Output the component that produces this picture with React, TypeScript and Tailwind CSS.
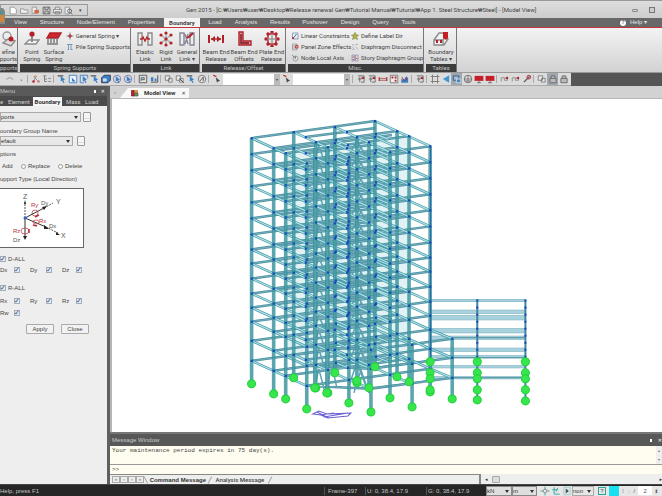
import type { ReactNode } from "react";

/* ---------- small icon set ---------- */

const RED = "#b3202a";
const GREY = "#8b8b8b";
const BLUE = "#3b7fc4";

function Svg({ size = 10, children }: { size?: number; children: ReactNode }) {
  return (
    <svg width={size} height={size} viewBox="0 0 16 16" fill="none" stroke={GREY} strokeWidth="1.4" className="shrink-0" aria-hidden="true">
      {children}
    </svg>
  );
}

const cursor = <path d="M6 3l7 6-3 .5 2 4-2 .8-1.500-4L6 12z" fill={BLUE} stroke="none" />;
const boxes = <path d="M2 3h7v7H2zM7 7h6v6H7z" fill="#eee" stroke="#777" />;

const tools: Record<string, ReactNode> = {
  undo: <path d="M2 9q5-6 11 0" />,
  dot: <path d="M7 9h3l-1.500 2z" fill="#555" stroke="none" />,
  nodes: <><path d="M4 4l8 8M4 12l4-8" stroke="#888" /><circle cx="4" cy="12" r="2" fill={RED} stroke="none" /><circle cx="12" cy="12" r="2" fill="#c77" stroke="none" /><circle cx="7" cy="4" r="2" fill="#c98" stroke="none" /></>,
  tree: <path d="M2 3h5M4 3v9h4M4 8h4M10 7h4M10 12h4" stroke="#777" />,
  pick: <><path d="M1 3h9" stroke="#555" strokeWidth="2" />{cursor}</>,
  win: <><path d="M2 2h12v12H2z" fill="#e7f0fa" stroke={BLUE} /><path d="M6 6l6 6H7z" fill="#2266bb" stroke="none" /></>,
  win2: <><path d="M2 2h12M2 2v12h6M14 2v5" stroke={BLUE} />{cursor}</>,
  cube: <><path d="M1 6l4-4h10v8l-4 4H1z" fill={BLUE} stroke="#335" /><path d="M3 7h6v5H3z" fill="#cde" stroke="none" /></>,
  ring: <><circle cx="8" cy="8" r="6" stroke="#77a" />{cursor}</>,
  doc: <><path d="M2 2h12v12H2z" stroke="#555" fill="#ddd" /><path d="M5 11V6h5v3H6" stroke="#456" /></>,
  align: <><path d="M3 13h11M14 2v11" stroke="#444" /><path d="M3 5h4v6H3zM9 7h3v4H9z" fill={BLUE} stroke="none" /></>,
  boxes,
  boxarrow: <>{boxes}<path d="M8 8l6 6" stroke="#444" /></>,
  clock: <><circle cx="8" cy="8" r="6" stroke="#777" /><path d="M5 11l5-6v6" stroke="#555" /></>,
  redcur: <><path d="M2 2l5 2" stroke={RED} strokeWidth="2" /><path d="M6 5l7 6-3 .5L8 14z" fill="#444" stroke="none" /></>,
  rb: <><path d="M3 3h10v10H8M3 8h6M6 5v8" stroke="#666" /><path d="M9 5h4v3H9z" fill={RED} stroke="none" /></>,
  spanr: <><path d="M2 5v6M14 5v6" stroke={RED} strokeWidth="2" /><path d="M2 7h12M2 10h12" stroke="#a55" /></>,
  grid: <><path d="M2 2h12v12H2z" stroke="#777" fill="#eee" /><path d="M4 4h3v3H4zM9 9h3v3H9zM9 4h3v3H9z" fill={RED} stroke="none" /></>,
  chart: <><path d="M2 14V7l4 3 4-7 3 4v7z" fill={BLUE} stroke="none" /><path d="M3 5l4 6 5-5" stroke={RED} /></>,
  frame: <path d="M4 1v14M12 1v14M1 4h14M1 12h14" stroke="#777" />,
  left: <path d="M13 2v12L3 8z" fill="#3f95cf" stroke="none" />,
  iso: <><path d="M2 3h9v7H2z" fill="#9bbbd8" stroke="#357" /><path d="M7 8h7v6H7z" fill="#4484bd" stroke="#dde" /></>,
  ball: <><circle cx="8" cy="8" r="6" fill="#ddd" stroke="#666" /><path d="M2 8h12M8 2v12M4 11h8" stroke="#777" /></>,
  monitor: <><path d="M1 3h14v8H1z" fill="#c41e28" stroke="none" /><path d="M5 14h6M8 11v3" stroke="#666" /></>,
  path: <><path d="M2 12V6h5v4h5V4" stroke="#888" /><path d="M9 5h4v3H9z" fill={RED} stroke="none" /></>,
  key: <><path d="M3 13L12 4" stroke="#555" strokeWidth="2" /><circle cx="11" cy="5" r="3" stroke={RED} /></>,
  lock: <path d="M3 7h10v7H3zM5 7V3h6v4" fill="#bbb" stroke="#666" />,
};

type ToolItem = string | { sep: true } | { active: string } | { field: string };
const S: ToolItem = { sep: true };

const toolbar: ToolItem[] = [
  "undo", "dot", S, "nodes", "tree", S, "pick", "win", "win2", "pick", "cube", "ring", "ring", S, "doc", "align", S,
  "boxes", "boxarrow", "pick", "clock", S, "redcur", { field: "Select by name" }, "redcur", { field: "Select by number" }, S,
  "rb", "rb", "spanr", "grid", "chart", S, "rb", S, "frame", "left", { active: "iso" }, "ball", "monitor", "monitor", S,
  "path", "path", "key", S, "boxes", { active: "lock" }, "lock",
];

function Toolbar() {
  return (
    <div className="flex h-[13px] shrink-0 items-center bg-[#555]">
      <div className="flex h-full items-center border-b border-[#aaa] bg-[#dcdcdc] pl-1 pr-[2px]">
        {toolbar.map((t, i) => {
          if (typeof t === "string")
            return (
              <button key={i} aria-label={t} className="flex w-[11px] shrink-0 justify-center">
                <Svg>{tools[t]}</Svg>
              </button>
            );
          if ("sep" in t) return <span key={i} className="ml-px mr-[2px] h-2 w-px shrink-0 bg-[#aaa]" />;
          if ("active" in t)
            return (
              <button key={i} aria-label={t.active} className="flex h-3 w-[11px] shrink-0 items-center justify-center bg-[#9fa8b0]">
                <Svg>{tools[t.active]}</Svg>
              </button>
            );
          return (
            <span key={i} className="mx-px flex h-[11px] w-[57px] shrink-0 bg-white">
              <input aria-label={t.field} className="min-w-0 flex-1 bg-white" />
              <button aria-label="Open list" className="w-[6px] bg-[#bbb] text-[4px] leading-[11px] text-[#444]">▾</button>
            </span>
          );
        })}
      </div>
    </div>
  );
}

/* ---------- ribbon ---------- */

const big: Record<string, ReactNode> = {
  define: <><circle cx="6" cy="5" r="4" stroke="#999" /><path d="M2 12l5-4 7 2-4 5z" fill="#ddd" /><circle cx="10" cy="8" r="2.500" fill={RED} stroke="none" /></>,
  point: <><path d="M1 13l4-4h10l-3 4H1z" fill="#f5f5f5" /><path d="M8 3v8" stroke={GREY} strokeWidth="2" /><circle cx="8" cy="3" r="2.600" fill={RED} stroke="none" /></>,
  surface: <><path d="M4 2h11l-3 5H1z" fill="#cf2633" stroke={RED} /><path d="M2 7v5M5 7v5M8 7v5M11 7v5M1 13h11" stroke="#777" /></>,
  elastic: <><path d="M1 2h4v12H1zM11 2h4v12h-4z" fill="#eee" /><path d="M3 8h2l1-2 2 4 2-4 1 2h2" stroke={RED} /></>,
  rigid: <><path d="M3 4l10 8M13 4L3 12M8 2v12" stroke="#aaa" />{[[3, 4], [13, 4], [3, 12], [13, 12], [8, 2], [8, 14], [8, 8]].map(([x, y]) => <circle key={x + "-" + y} cx={x} cy={y} r="1.600" fill={RED} stroke="none" />)}</>,
  general: <><path d="M1 2h4v12H1zM11 2h4v12h-4zM6 3l3 10M9 3L6 13" fill="#eee" stroke="#889" /><path d="M8 7l3-2 3-3" stroke={RED} strokeWidth="2" /></>,
  release: <><path d="M1 4v8M15 4v8" stroke={RED} strokeWidth="2" /><path d="M3 8h10" stroke={RED} /><path d="M3 8l4-3v6zM13 8L9 5v6z" fill={RED} stroke="none" /></>,
  offsets: <><path d="M3 1h4v9h8v4H3z" fill="#d9a0a0" stroke={RED} /><path d="M5 3v9h8" stroke="#7a1018" /></>,
  plate: <><path d="M4 3h8v10H4z" stroke={RED} /><path d="M8 1v14M2 8h12" stroke="#999" />{[[4, 3], [12, 3], [4, 13], [12, 13], [8, 1], [8, 15], [2, 8], [14, 8]].map(([x, y]) => <circle key={x + "-" + y} cx={x} cy={y} r="1.700" fill={RED} stroke="none" />)}</>,
  tables: <><path d="M1 9l5-7h6l3 6-4 6H1z" fill="#f3f3f3" /><path d="M1 9h9l3-5M10 9v5" stroke="#888" /><path d="M10 1h5v6l-2 2-3-2z" fill="#c41e28" stroke="none" /><path d="M3 9h2v3H3zM7 9h2v3H7z" fill={RED} stroke="none" /></>,
};

const small: Record<string, ReactNode> = {
  spring: <><path d="M8 1v14M1 8h14" stroke="#888" strokeWidth="2" /><path d="M8 4v8M4 8h8" stroke={RED} strokeWidth="2" /></>,
  pile: <path d="M2 3h11M5 3v10M10 3v10M3 13h3M9 13h4" stroke="#4e7ea6" />,
  linear: <><path d="M3 2h11v12H3z" stroke="#68a" /><path d="M5 12l6-8" stroke={BLUE} strokeWidth="2" /><circle cx="4" cy="12" r="2" fill={RED} stroke="none" /></>,
  panel: <><path d="M3 2h9v12H3zM3 6h9M3 10h9" /><path d="M9 5h5v5H9z" fill="#dba0a0" stroke={RED} /></>,
  axis: <><circle cx="9" cy="9" r="5" /><path d="M2 2l7 7V4" stroke="#667" /></>,
  label: <path d="M8 1l2 5 5 0-4 4 2 5-5-3-5 3 2-5-4-4h5z" fill="#b9b24a" stroke="#7c8a3c" />,
  disconnect: <path d="M2 4h5M9 3h5M3 8l4 5M10 8l4 5M2 13h3" stroke="#99a" />,
  story: <><path d="M2 2h5v12H2zM9 2h5v12H9z" stroke="#88a" /><path d="M3 6h3M10 9h3M3 11h3" stroke={RED} /></>,
};

function BigButton({ icon, lines, w }: { icon: string; lines: string[]; w: string }) {
  return (
    <button className={`flex flex-col items-center whitespace-nowrap pt-px leading-[7px] ${w}`}>
      <Svg size={16}>{big[icon]}</Svg>
      <span className="mt-px">{lines[0]}</span>
      <span>{lines[1]}</span>
    </button>
  );
}

function SmallButton({ icon, text }: { icon: string; text: string }) {
  return (
    <button className="flex h-[11px] items-center gap-[2px] whitespace-nowrap">
      <Svg size={8}>{small[icon]}</Svg>
      {text}
    </button>
  );
}

function Group({ title, w, children }: { title: string; w: string; children: ReactNode }) {
  return (
    <section className={`mr-[2px] flex h-full shrink-0 flex-col border-r border-[#777] ${w}`}>
      <div className="flex flex-1 items-start pt-[2px]">{children}</div>
      <h2 className="h-2 bg-[#3c3c3c] text-center leading-2 text-[#c4c4c4]">{title}</h2>
    </section>
  );
}

function Ribbon() {
  return (
    <div className="flex h-[45px] shrink-0 border-b border-[#999] bg-linear-to-b from-[#f3f3f3] to-[#d2d2d2] font-['Roboto',sans-serif] text-[#444]">
      <Group title="pports" w="w-[18px]">
        <BigButton icon="define" lines={["efine", "pports"]} w="w-[17px]" />
      </Group>
      <Group title="Spring Supports" w="w-[111px]">
        <BigButton icon="point" lines={["Point", "Spring"]} w="w-[24px]" />
        <BigButton icon="surface" lines={["Surface", "Spring"]} w="w-[20px]" />
        <div className="ml-[2px]">
          <SmallButton icon="spring" text="General Spring ▾" />
          <SmallButton icon="pile" text="Pile Spring Supports" />
        </div>
      </Group>
      <Group title="Link" w="w-[67px]">
        <BigButton icon="elastic" lines={["Elastic", "Link"]} w="w-[24px]" />
        <BigButton icon="rigid" lines={["Rigid", "Link"]} w="w-[18px]" />
        <BigButton icon="general" lines={["General", "Link ▾"]} w="w-[24px]" />
      </Group>
      <Group title="Release/Offset" w="w-[84px]">
        <BigButton icon="release" lines={["Beam End", "Release"]} w="w-[28px]" />
        <BigButton icon="offsets" lines={["Beam End", "Offsets"]} w="w-[28px]" />
        <BigButton icon="plate" lines={["Plate End", "Release"]} w="w-[27px]" />
      </Group>
      <Group title="Misc." w="w-[136px]">
        <div className="ml-[3px] w-[60px]">
          <SmallButton icon="linear" text="Linear Constraints" />
          <SmallButton icon="panel" text="Panel Zone Effects" />
          <SmallButton icon="axis" text="Node Local Axis" />
        </div>
        <div>
          <SmallButton icon="label" text="Define Label Dir" />
          <SmallButton icon="disconnect" text="Diaphragm Disconnect" />
          <SmallButton icon="story" text="Story Diaphragm Group" />
        </div>
      </Group>
      <Group title="Tables" w="w-[31px]">
        <BigButton icon="tables" lines={["Boundary", "Tables ▾"]} w="w-[30px]" />
      </Group>
    </div>
  );
}

/* ---------- title bar and menu ---------- */

function TitleBar() {
  return (
    <header className="flex h-[18px] shrink-0 items-center border-t border-[#999] bg-linear-to-b from-[#dedede] to-[#cdcdcd] text-[#444]">
      <div className="mt-px flex h-3 w-[88px] shrink-0 items-center gap-[2px] border border-[#999] pl-2">
        <Svg size={9}><path d="M2 2h7l4 4v8H2z" fill="#fff" /></Svg>
        <Svg size={9}><path d="M1 5h5l1 2h7v6H1z" fill="#eee" /></Svg>
        <Svg size={9}><path d="M2 2h8v11H2z" fill="#eee" /><path d="M6 7h8v6H6z" fill="#d06a3c" stroke="none" /></Svg>
        <Svg size={9}><path d="M2 2h12v12H2zM5 2v4h6V2M5 14V9h6v5" stroke="#555" /></Svg>
        <Svg size={9}><path d="M4 6V2h8v4M1 6h14v6H1zM4 10h8v4H4z" stroke="#777" fill="#eee" /></Svg>
        <Svg size={9}><path d="M2 2h8v12H2z" fill="#eee" /><circle cx="10" cy="9" r="3.500" stroke="#555" /><path d="M12 12l3 3" stroke="#555" /></Svg>
        <span className="ml-1 text-[5px]">▾</span>
      </div>
      <h1 className="flex-1 whitespace-nowrap pl-[98px] font-['Roboto',sans-serif]">
        Gen 2015 - [C:₩Users₩user₩Desktop₩Release renewal Gen₩Tutorial Manual₩Tuturial₩App 1. Steel Structure₩Steel] - [Model View]
      </h1>
      <div className="flex gap-[11px] pr-[7px]">
        <button aria-label="Minimize" className="mt-[2px] h-[3px] w-[6px] rounded-[1px] border border-[#888]" />
        <button aria-label="Restore" className="h-[6px] w-[6px] border border-[#777] bg-[#ccc]" />
      </div>
    </header>
  );
}

const menus = ["View", "Structure", "Node/Element", "Properties"];
const menusAfter: [string, string][] = [
  ["Load", "w-[30px]"], ["Analysis", "w-[32px]"], ["Results", "w-[36px]"], ["Pushover", "w-[34px]"],
  ["Design", "w-[36px]"], ["Query", "w-[25px]"], ["Tools", "w-[31px]"],
];

function MenuBar() {
  return (
    <nav className="flex h-[10px] shrink-0 items-end border-b border-[#c8343c] bg-[#686868] text-[#e4e4e4]">
      <div className="flex w-[164px] shrink-0 justify-between pl-[14px] pr-[9px]">
        {menus.map((m) => <button key={m} className="leading-[9px]">{m}</button>)}
      </div>
      <button className="h-[9px] w-9 bg-[#f3f3f3] text-center font-['Roboto',sans-serif] font-bold leading-[9px] text-[#444]">Boundary</button>
      <div className="flex">
        {menusAfter.map(([m, w]) => <button key={m} className={`text-center leading-[9px] ${w}`}>{m}</button>)}
      </div>
      <button className="ml-auto flex items-center gap-1 pr-[15px] leading-[9px]">
        <span className="flex h-[6px] w-[6px] items-center justify-center rounded-full bg-white text-[5px] font-bold text-[#555]">?</span>
        Help ▾
      </button>
    </nav>
  );
}

/* ---------- side panel ---------- */

function Picker({ label, value, w, tone = "border-[#aaa] bg-[#e8e8e8]" }: { label: string; value: string; w: string; tone?: string }) {
  return (
    <span className={`relative flex h-[10px] shrink-0 items-center border ${tone} ${w}`}>
      <select aria-label={label} defaultValue={value} className="h-full w-full appearance-none bg-transparent leading-2 text-[#333]">
        <option>{value}</option>
      </select>
      <span className="pointer-events-none absolute right-[2px] top-[3px] border-x-2 border-t-[3px] border-x-transparent border-t-[#333]" />
    </span>
  );
}

function More() {
  return <button className="h-[10px] w-2 rounded-[1px] border border-[#999] bg-[#f4f4f4] text-center leading-[5px] text-[#666]">…</button>;
}

function Tick({ text, before, w = "" }: { text: string; before?: boolean; w?: string }) {
  const box = (
    <input
      type="checkbox"
      defaultChecked
      className="flex h-[6px] w-[6px] appearance-none items-center justify-center border border-[#a3aebb] bg-[#e4eaf2] checked:before:font-['DejaVu_Sans'] checked:before:text-[7px] checked:before:font-bold checked:before:leading-none checked:before:text-[#334a80] checked:before:content-['✓']"
    />
  );
  return (
    <label className={`flex items-center ${before ? "gap-[2px]" : "justify-between"} ${w}`}>
      {before && box}
      {text}
      {!before && box}
    </label>
  );
}

function Radio({ text, checked }: { text: string; checked?: boolean }) {
  return (
    <label className="flex items-center gap-[2px]">
      <input type="radio" name="option" defaultChecked={checked} className="h-[5px] w-[5px] appearance-none rounded-full border border-[#999] bg-white checked:bg-[#567]" />
      {text}
    </label>
  );
}

function AxisDiagram() {
  return (
    <svg viewBox="0 -1 83 59" className="h-[59px] w-[83px]" fontFamily="Liberation Sans, sans-serif" fontSize="7" aria-label="Local direction">
      <g stroke="#555" fill="none">
        <path d="M25 28V12" strokeDasharray="2 1" />
        <path d="M25 28v19M25 28l19-10M25 28l21 9" stroke="#333" />
        <path d="M44 18l9-5M46 37l12 6" strokeDasharray="2 1" />
      </g>
      <path d="M25 10l-1 4h2zM25 50l-2-4h4zM47 16l-5 1 2 3zM49 39l-5-4v4zM60 45l-4-3v3z" fill="#222" />
      <circle cx="25" cy="28" r="1.500" fill="#2664d8" />
      <g fill="none" stroke="#b83038" strokeWidth=".7">
        <ellipse cx="35" cy="23" rx="3" ry="3" />
        <ellipse cx="36" cy="32" rx="3" ry="2" />
        <ellipse cx="25" cy="41" rx="4" ry="3" />
        <path d="M35 27l4-2M33 35l4 1M29 39v4" strokeWidth="1.500" />
      </g>
      <g fill="#555">
        <text x="23" y="9">Z</text>
        <text x="56" y="14">Y</text>
        <text x="61" y="48">X</text>
        <text x="41" y="15" fontSize="6">Dy</text>
        <text x="49" y="38" fontSize="6">Dx</text>
        <text x="13" y="52" fontSize="6">Dz</text>
      </g>
      <g fill="#b83038" fontSize="6">
        <text x="31" y="17">Ry</text>
        <text x="39" y="33">Rx</text>
        <text x="13" y="43">Rz</text>
      </g>
    </svg>
  );
}

function SidePanel() {
  const push = "h-[10px] rounded-[1px] border border-[#aaa] bg-[#f2f2f2] text-center leading-2 w-[28px]";
  return (
    <aside className="flex w-[110px] shrink-0 flex-col overflow-hidden border-r-3 border-[#606060] bg-[#eee] text-[#444]">
      <div className="flex h-[10px] shrink-0 items-center bg-[#5a5a5a] text-[#c8c8c8]">
        <h2 className="flex-1">Menu</h2>
        <button aria-label="Pin" className="mr-[5px] h-[3px] w-[2px] bg-white" />
        <button aria-label="Close panel" className="mr-[2px] text-[5px] font-bold text-white">✕</button>
      </div>
      <div className="flex h-[10px] shrink-0 items-end bg-[#4a4a4a] font-['Roboto',sans-serif] text-[#ccc]">
        <button className="w-2 text-left leading-[9px]">e</button>
        <button className="w-[25px] text-left leading-[9px]">Element</button>
        <button className="h-[9px] w-[29px] bg-[#f6f6f6] font-bold leading-[9px] text-[#333]">Boundary</button>
        <button className="ml-1 w-[19px] text-left leading-[9px]">Mass</button>
        <button className="leading-[9px]">Load</button>
      </div>
      <div className="flex items-center gap-[2px] pt-[6px]">
        <Picker label="Boundary type" value="ports" w="w-[81px]" />
        <More />
      </div>
      <h3 className="mt-[5px] h-[9px] leading-[9px]">oundary Group Name</h3>
      <div className="flex items-center gap-1">
        <Picker label="Group name" value="efault" w="w-[73px]" />
        <More />
      </div>
      <h3 className="mt-1 h-2 leading-2">ptions</h3>
      <div className="mt-1 flex h-2 items-center">
        <label className="w-[21px] pl-[2px]">
          <input type="radio" name="option" defaultChecked className="sr-only" />
          Add
        </label>
        <span className="w-[37px]"><Radio text="Replace" /></span>
        <Radio text="Delete" />
      </div>
      <h3 className="mt-[5px] h-2 whitespace-nowrap leading-2">upport Type (Local Direction)</h3>
      <div className="mt-[5px] h-[60px] w-[84px] shrink-0 overflow-hidden border border-l-0 border-[#666] bg-white">
        <AxisDiagram />
      </div>
      <div className="mt-[7px] flex h-2 items-center"><Tick text="D-ALL" before /></div>
      <div className="mt-[3px] flex h-2 items-center gap-[10px]">
        <Tick text="Dx" w="w-[20px]" />
        <Tick text="Dy" w="w-[22px]" />
        <Tick text="Dz" w="w-[20px]" />
      </div>
      <div className="mt-[10px] flex h-2 items-center"><Tick text="R-ALL" before /></div>
      <div className="mt-[5px] flex h-2 items-center gap-[10px]">
        <Tick text="Rx" w="w-[20px]" />
        <Tick text="Ry" w="w-[22px]" />
        <Tick text="Rz" w="w-[20px]" />
      </div>
      <div className="mt-1 flex h-2 items-center"><Tick text="Rw" w="w-[20px]" /></div>
      <div className="mt-[7px] flex gap-[7px] pl-[26px]">
        <button className={push}>Apply</button>
        <button className={push}>Close</button>
      </div>
    </aside>
  );
}

/* ---------- structural model ---------- */

type P = [number, number];
const U: P[] = [[0, 0], [42, -6], [83, -11], [123, -17]];
const V: P[] = [[0, 0], [22, 10], [34, 15], [55, 25]];
const PODIUM: P = [77, 34];
const FLOORS = [138, 154, 170, 186, 202, 218, 234, 249, 263, 278, 293, 307, 321, 340, 360];
const BASE = 383;

const at = (u: P, v: P, y: number): P => [252 + u[0] + v[0], y + u[1] + v[1]];
const seg = (a: P, b: P) => `M${a[0]} ${a[1]}L${b[0]} ${b[1]}`;

function buildModel() {
  const along: string[] = [];
  const across: string[] = [];
  const columns: string[] = [];
  const braces: string[] = [];
  const joints: P[] = [];
  const supports: P[] = [];

  FLOORS.forEach((y, k) => {
    V.forEach((v) => along.push(seg(at(U[0], v, y), at(U[3], v, y))));
    U.forEach((u) => across.push(seg(at(u, V[0], y), at(u, V[3], y))));
    U.forEach((u) => V.forEach((v) => joints.push(at(u, v, y))));
    // secondary beams of the service core
    const m: P = [62, -8];
    const n: P = [102, -14];
    [m, n].forEach((u) => across.push(seg(at(u, V[1], y), at(u, V[2], y))));
    [[28, 12], [12, 5]].forEach((v) => along.push(seg(at(U[1], v as P, y), at([112, -15], v as P, y))));
    joints.push(at(m, V[1], y), at(m, V[2], y), at(n, V[1], y), at(U[1], [12, 5], y), at(U[2], [12, 5], y));
    const next = FLOORS[k + 1] ?? BASE;
    // chevron braces: left foot, apex, right foot and height offset
    [[314, 319, 325, 8], [327, 332, 337, 4], [349, 357, 366, 2], [354, 361, 369, 9]].forEach(([a, b, c, o]) => {
      braces.push(`M${a} ${next + o}L${b} ${y + o}L${c} ${next + o}`);
    });
  });
  U.forEach((u) => V.forEach((v) => {
    columns.push(seg(at(u, v, FLOORS[0]), at(u, v, BASE)));
    supports.push(at(u, v, BASE));
  }));
  [315, 327, 357].forEach((x, i) => {
    const top = [148, 146, 140][i];
    const foot = [387, 392, 380][i];
    columns.push(`M${x} ${top}V${foot}`);
    supports.push([x, foot]);
  });
  // podium in front of the tower
  FLOORS.slice(-3).forEach((y) => {
    along.push(seg(at(U[1], PODIUM, y), at(U[3], PODIUM, y)));
    U.slice(1).forEach((u) => across.push(seg(at(u, V[3], y), at(u, PODIUM, y))));
    along.push(seg(at(U[0], V[3], y), at(U[1], PODIUM, y)));
    U.slice(1).forEach((u) => joints.push(at(u, PODIUM, y)));
  });
  U.slice(1).forEach((u) => {
    columns.push(seg(at(u, PODIUM, 321), at(u, PODIUM, BASE)));
    supports.push(at(u, PODIUM, BASE - (u === U[3] ? 2 : 0)));
  });
  return { along, across, columns, braces, joints, supports };
}

const model = buildModel();
const ANNEX_ROWS: [number, number][] = [[300, 2], [311, 3], [317, 4], [330, 4], [337, 3], [349, 3], [356, 2], [366, 2], [377, 2]];
const ANNEX_SUPPORTS: P[] = [430, 477, 525].flatMap((x) => [361, 372, 378, 389].map((y): P => [x, y])).concat([[477, 399], [525, 400]]);

function ModelCanvas() {
  return (
    <svg viewBox="112 99 550 332" preserveAspectRatio="xMidYMid slice" className="h-full w-full" fill="none" aria-label="Steel structure model">
      <g>
        {ANNEX_ROWS.map(([y, h]) => (
          <g key={y}>
            <path d={`M430 ${y}H525`} stroke="#78b0bf" strokeWidth={h + 1} />
            <path d={`M430 ${y}H525`} stroke="#a8d2dd" strokeWidth={h} />
          </g>
        ))}
        <path d="M370 367L452 357M370 387L452 377H525M452 337H525M452 357H525" stroke="#4a8d9c" />
        {[477, 525].map((x) => <path key={x} d={`M${x} 299V400`} stroke="#3f84a4" strokeWidth="2" />)}
        {[477, 525].map((x) => <path key={x} d={`M${x} 299V361`} stroke="#1e49b8" strokeWidth="2" strokeDasharray="2 5" />)}
      </g>
      <path d="M286 153L375 140L409 137V350L348 366L286 356z" fill="#9fd0da" fillOpacity=".3" />
      <path d={model.braces.join("")} stroke="#5aa5b4" strokeWidth="1.500" />
      <path d={model.along.join("")} stroke="#4796a4" strokeWidth="2.500" />
      <path d={model.along.join("")} stroke="#7aa9b9" strokeWidth="1" />
      <path d={model.across.join("")} stroke="#419da9" strokeWidth="2.600" />
      <path d={model.across.join("")} stroke="#b4dfe6" strokeWidth="1.200" />
      <path d={model.columns.join("")} stroke="#33919b" strokeWidth="3.600" strokeOpacity=".8" />
      <path d={model.columns.join("")} stroke="#5ea5ae" strokeWidth="1" strokeOpacity=".8" />
      <path d="M430.500 145V361M349 157V350" stroke="#2a62ae" strokeWidth="1" />
      {model.joints.map(([x, y], i) => <rect key={i} x={x - 1} y={y - 1} width="2.200" height="2.200" fill="#1747bd" />)}
      {[...model.supports, ...ANNEX_SUPPORTS].map(([x, y], i) => (
        <circle key={i} cx={x} cy={y} r="4" fill="#37e64c" stroke="#22cf3b" strokeWidth="1" />
      ))}
      <path d="M313 413l6-3 8 3 24-1-3 3-20 2-7-3zM317 411l12 6M324 416l24-4M320 414l14-2" stroke="#6a5fd6" strokeWidth="1" />
    </svg>
  );
}

function ModelView() {
  return (
    <section className="flex min-h-0 flex-1 flex-col">
      <div className="flex h-3 shrink-0 items-end bg-[#d2d2d2] text-[#333]">
        <span className="w-[10px] self-center pl-1 text-[#888]">‹</span>
        <div className="h-[10px] w-2 bg-[#f8f8f8] [clip-path:polygon(100%_0,100%_100%,0_100%)]" />
        <div className="flex h-[10px] items-center bg-[#f8f8f8] pl-[3px]">
          <Svg size={8}>
            <path d="M1 3h6v11H1z" fill="#b3202a" stroke="#712" />
            <path d="M7 2h7v6H7z" fill="#d8973e" stroke="none" />
            <path d="M7 8h7v6H7z" fill="#6b8f4b" stroke="#555" />
          </Svg>
          <span className="ml-[5px] font-['Roboto',sans-serif] font-bold">Model View</span>
          <button aria-label="Close view" className="ml-[6px] pr-[3px] text-[5px]">✕</button>
        </div>
      </div>
      <div className="min-h-0 flex-1 border-l-2 border-t border-[#b5b5b5] bg-white">
        <ModelCanvas />
      </div>
    </section>
  );
}

/* ---------- message window ---------- */

function MessageWindow() {
  const nav = "h-[7px] w-2 border border-[#aaa] text-center text-[5px] leading-[5px] text-[#777]";
  return (
    <section className="shrink-0">
      <div className="flex h-[14px] items-center border-t-2 border-[#777] bg-[#585858] pl-[2px] text-[#c8c8c8]">
        <h2 className="flex-1">Message Window</h2>
        <button aria-label="Pin messages" className="mr-[6px] h-[3px] w-[2px] bg-white" />
        <button aria-label="Close messages" className="text-[5px] font-bold text-white">✕</button>
      </div>
      <div className="flex h-[19px] border-b border-[#999] bg-[#fffdf0]">
        <p className="flex-1 pl-[2px] pt-px font-['Liberation_Mono',monospace] leading-2 text-[#444]">
          Your maintenance period expires in 75 day(s).
        </p>
        <div className="flex w-[6px] flex-col items-center justify-around bg-[#eee] text-[4px] text-[#777]">
          <span>▴</span>
          <span>▾</span>
        </div>
      </div>
      <div className="flex h-[9px] items-center bg-[#fffdf0] pl-[2px] font-['Liberation_Mono',monospace] text-[#444]">
        <label htmlFor="command">&gt;&gt;</label>
        <input id="command" className="h-full min-w-0 flex-1 bg-transparent outline-none" />
      </div>
      <div className="flex h-[10px] items-center bg-[#eee] text-[#333]">
        <div className="flex h-full w-[371px] items-center border-r-2 border-t border-[#888] pl-[2px]">
          {["«", "‹", "›", "»"].map((s) => <button key={s} className={nav}>{s}</button>)}
          <span className="pr-[2px] text-[#555]">╲</span>
          <button className="font-bold">Command Message</button>
          <span className="pl-[2px] pr-1 text-[#555]">╱</span>
          <button className="font-['Roboto',sans-serif] font-medium text-[#444]">Analysis Message</button>
          <span className="pl-1 text-[#555]">╱</span>
        </div>
        <span className="ml-1 text-[5px]">◂</span>
        <span className="ml-1 h-[7px] w-2 rounded-[1px] border border-[#aaa] bg-[#ddd]" />
        <span className="ml-auto text-[5px]">▸</span>
      </div>
    </section>
  );
}

function StatusBar() {
  const tone = "border-[#888] bg-[#dedede]";
  return (
    <footer className="flex h-3 shrink-0 items-center whitespace-nowrap border-t border-[#444] bg-[#262626] text-[#c4c4c4]">
      <span className="flex-1">Help, press F1</span>
      <span className="w-[41px] border-l border-[#555] pl-[3px]">Frame-397</span>
      <span className="w-[61px] border-l border-[#555] pl-px">U: 0, 38.4, 17.9</span>
      <span className="w-[60px] border-l border-[#555] pl-px">G: 0, 38.4, 17.9</span>
      <Picker label="Force unit" value="kN" w="w-[26px]" tone={tone} />
      <Picker label="Length unit" value="m" w="w-[25px]" tone={tone} />
      <div className="flex h-[10px] w-[125px] items-center bg-[#e6e6e6] pl-[2px] text-[#555]">
        <button aria-label="Snap" className="flex w-[11px] justify-center"><Svg><path d="M8 1v14M1 8h14" stroke="#2aa39c" /><circle cx="8" cy="8" r="3" fill="#e6e6e6" /></Svg></button>
        <button aria-label="Axis" className="flex w-[11px] justify-center"><Svg><path d="M5 2v11h9M2 6h9M11 3l-3 6" stroke="#2aa39c" /></Svg></button>
        <button aria-label="Run" className="flex w-[11px] justify-center"><Svg><path d="M3 2h10v12H3z" stroke="#9cc" /><path d="M6 4l5 4-5 4z" fill="#355" stroke="none" /></Svg></button>
        <Picker label="Filter" value="non" w="w-[22px]" tone="border-[#aaa] bg-[#e6e6e6]" />
        <button className="ml-[4px] h-2 w-2 border border-[#2aa39c] text-center leading-[6px]">?</button>
        <button aria-label="Colour" className="ml-[3px] h-[10px] w-[10px] bg-[#19e0ee]" />
        <span className="ml-[3px]">⁝</span>
        <span className="ml-[4px]">:</span>
        <span className="ml-[4px]">/</span>
        <input aria-label="Step" defaultValue="2" className="ml-[3px] h-[9px] w-[14px] bg-white text-center" />
        <span className="ml-[2px] text-[5px]">⬍</span>
      </div>
    </footer>
  );
}

export default function App() {
  return (
    <div className="relative flex h-screen flex-col overflow-hidden bg-[#d4d4d4] font-['Liberation_Sans','DejaVu_Sans',sans-serif] text-[6px] leading-2 [&_h1]:text-[6px]">
      <TitleBar />
      <MenuBar />
      <Ribbon />
      <Toolbar />
      <svg viewBox="0 0 5 16" className="absolute left-0 top-2 h-4 w-[5px]" aria-hidden="true">
        <path d="M0 0h3l2 3v13H0z" fill="#888" />
        <path d="M0 2h3v5H0z" fill="#5b8f8a" />
        <path d="M0 7h4v7H0z" fill="#d0863e" />
      </svg>
      <main className="flex min-h-0 flex-1">
        <SidePanel />
        <div className="flex min-w-0 flex-1 flex-col">
          <ModelView />
          <MessageWindow />
        </div>
      </main>
      <StatusBar />
    </div>
  );
}
